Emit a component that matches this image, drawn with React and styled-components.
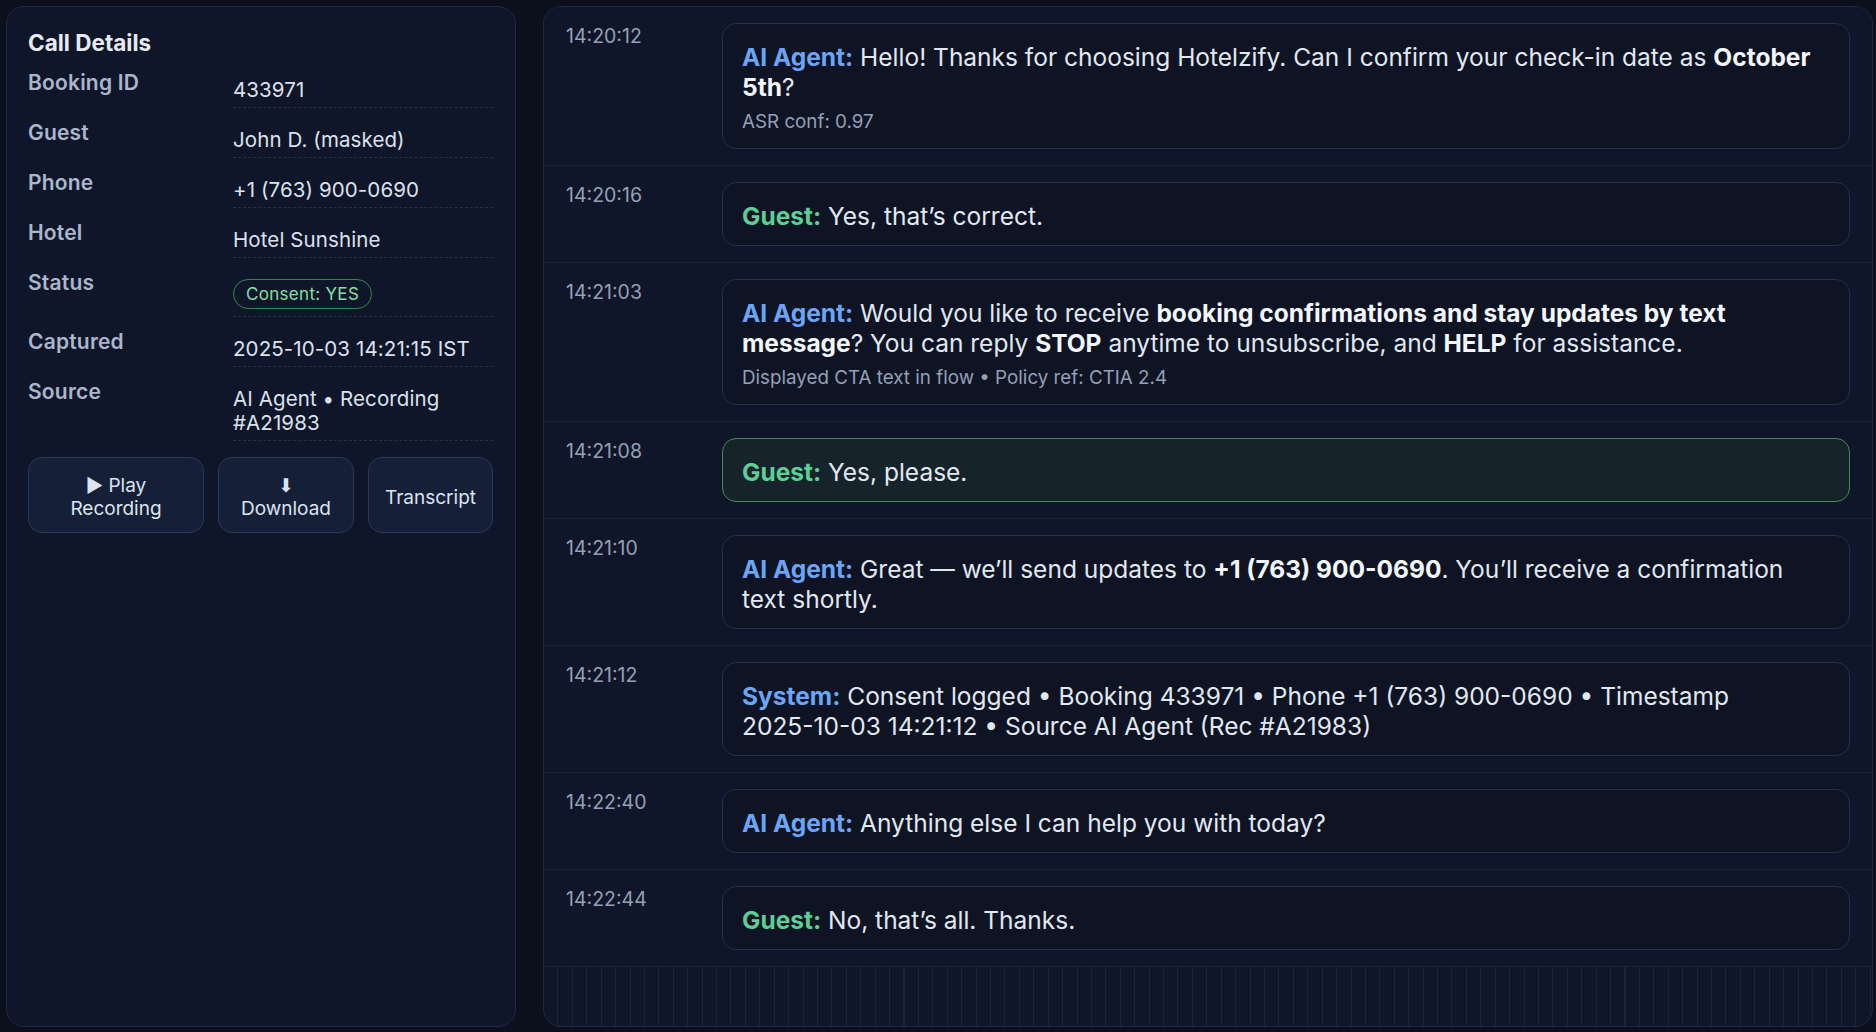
import React from "react";
import styled, { createGlobalStyle, css } from "styled-components";

const GlobalStyle = createGlobalStyle`
  html, body { margin: 0; padding: 0; }
  body {
    background: #0b101c;
    font-family: Inter, "Noto Sans", "Liberation Sans", sans-serif;
    color: #e2e8f0;
  }
  * { box-sizing: border-box; }
`;

const Page = styled.div`
  display: grid;
  grid-template-columns: 510px 1fr;
  column-gap: 27px;
  height: 100vh;
  padding: 6px 3px 5px 6px;
`;

const DetailsPanel = styled.aside`
  background: #10162a;
  border: 1px solid #1f2940;
  border-radius: 18px;
  padding: 22px 22px 22px 21px;
  display: flex;
  flex-direction: column;
`;

const PanelTitle = styled.h2`
  margin: 0 0 14px;
  font-size: 22.5px;
  line-height: 28px;
  font-weight: 700;
  color: #e6ebf3;
`;

const DetailList = styled.dl`
  margin: 0;
  display: flex;
  flex-direction: column;
  gap: 13px;
`;

const DetailRow = styled.div`
  display: grid;
  grid-template-columns: 205px 1fr;
`;

const Label = styled.dt`
  margin: 0;
  font-size: 21px;
  line-height: 24px;
  font-weight: 600;
  letter-spacing: 0.2px;
  color: #aab6ca;
`;

const Value = styled.dd`
  margin: 0;
  padding: 7px 0 5px;
  font-size: 20.5px;
  line-height: 24px;
  letter-spacing: 0.1px;
  color: #dbe2ec;
  border-bottom: 1px dashed #263047;
`;

const Badge = styled.span`
  display: inline-block;
  vertical-align: top;
  margin: 1px 0 2px;
  padding: 0 12px;
  font-size: 17px;
  line-height: 28px;
  letter-spacing: 0.3px;
  color: #86e0a0;
  border: 1px solid #2f8a4a;
  border-radius: 999px;
`;

const ActionBar = styled.div`
  display: grid;
  grid-template-columns: 176px 136px 125px;
  column-gap: 14px;
  margin-top: 16px;
`;

const ActionButton = styled.button`
  height: 76px;
  padding: 14px 14px 10px;
  display: flex;
  align-items: center;
  justify-content: center;
  text-align: center;
  font-family: inherit;
  font-size: 19px;
  line-height: 23px;
  color: #dce3ee;
  background: #152038;
  border: 1px solid #2a3954;
  border-radius: 14px;
`;

const TranscriptPanel = styled.section`
  border: 1px solid #1f2940;
  border-radius: 18px;
  overflow: hidden;
  background-color: #10162a;
  background-image: repeating-linear-gradient(
    90deg,
    transparent 0,
    transparent 13.4px,
    #1c2438 13.4px,
    #1c2438 14.42px
  );
  display: flex;
  flex-direction: column;
`;

const TurnRow = styled.div`
  display: grid;
  grid-template-columns: 136px 1fr;
  column-gap: 20px;
  padding: 16px 22px;
  background: #10162a;
  border-bottom: 1px solid #1a2235;
`;

const Time = styled.div`
  padding-top: 1px;
  font-size: 19.5px;
  line-height: 24px;
  color: #94a0b5;
`;

const Bubble = styled.div`
  padding: 18px 19px 14px;
  font-size: 24.5px;
  line-height: 30px;
  color: #e2e8f0;
  background: #0e1424;
  border: 1px solid #24314a;
  border-radius: 14px;
  ${(p) =>
    p.$highlight &&
    css`
      background: #16232b;
      border-color: #3c8f4f;
    `}
`;

const speakerColors = {
  agent: "#6ba6f6",
  system: "#6ba6f6",
  guest: "#5dcf95",
};

const Speaker = styled.span`
  font-weight: 700;
  color: ${(p) => speakerColors[p.$role]};
`;

const Strong = styled.strong`
  font-weight: 700;
  color: #f3f6fa;
`;

const NoWrap = styled.span`
  white-space: nowrap;
`;

const Note = styled.div`
  margin-top: 8px;
  font-size: 18.8px;
  line-height: 24px;
  color: #94a0b5;
`;

const details = [
  ["Booking ID", "433971"],
  ["Guest", "John D. (masked)"],
  ["Phone", "+1 (763) 900-0690"],
  ["Hotel", "Hotel Sunshine"],
  ["Status", <Badge>Consent: YES</Badge>],
  ["Captured", "2025-10-03 14:21:15 IST"],
  ["Source", "AI Agent • Recording #A21983"],
];

const turns = [
  {
    time: "14:20:12",
    role: "agent",
    who: "AI Agent:",
    body: (
      <>
        Hello! Thanks for choosing Hotelzify. Can I confirm your check-in date as{" "}
        <Strong>October 5th</Strong>?
      </>
    ),
    note: "ASR conf: 0.97",
  },
  { time: "14:20:16", role: "guest", who: "Guest:", body: "Yes, that’s correct." },
  {
    time: "14:21:03",
    role: "agent",
    who: "AI Agent:",
    body: (
      <>
        Would you like to receive{" "}
        <Strong>booking confirmations and stay updates by text message</Strong>? You can
        reply <Strong>STOP</Strong> anytime to unsubscribe, and <Strong>HELP</Strong> for
        assistance.
      </>
    ),
    note: "Displayed CTA text in flow • Policy ref: CTIA 2.4",
  },
  { time: "14:21:08", role: "guest", who: "Guest:", body: "Yes, please.", highlight: true },
  {
    time: "14:21:10",
    role: "agent",
    who: "AI Agent:",
    body: (
      <>
        Great — we’ll send updates to <Strong>+1 (763) 900-0690</Strong>. You’ll receive a
        confirmation text shortly.
      </>
    ),
  },
  {
    time: "14:21:12",
    role: "system",
    who: "System:",
    body: (
      <>
        Consent logged • Booking 433971 • Phone +1 (763) 900-0690 • Timestamp{" "}
        <NoWrap>2025-10-03</NoWrap> 14:21:12 • Source AI Agent (Rec #A21983)
      </>
    ),
  },
  {
    time: "14:22:40",
    role: "agent",
    who: "AI Agent:",
    body: "Anything else I can help you with today?",
  },
  { time: "14:22:44", role: "guest", who: "Guest:", body: "No, that’s all. Thanks." },
];

export default function App() {
  return (
    <>
      <GlobalStyle />
      <Page>
        <DetailsPanel>
          <PanelTitle>Call Details</PanelTitle>
          <DetailList>
            {details.map(([label, value]) => (
              <DetailRow key={label}>
                <Label>{label}</Label>
                <Value>{value}</Value>
              </DetailRow>
            ))}
          </DetailList>
          <ActionBar>
            <ActionButton>▶ Play Recording</ActionButton>
            <ActionButton>⬇ Download</ActionButton>
            <ActionButton>Transcript</ActionButton>
          </ActionBar>
        </DetailsPanel>
        <TranscriptPanel>
          {turns.map((t) => (
            <TurnRow key={t.time}>
              <Time>{t.time}</Time>
              <Bubble $highlight={t.highlight}>
                <Speaker $role={t.role}>{t.who}</Speaker> {t.body}
                {t.note && <Note>{t.note}</Note>}
              </Bubble>
            </TurnRow>
          ))}
        </TranscriptPanel>
      </Page>
    </>
  );
}
